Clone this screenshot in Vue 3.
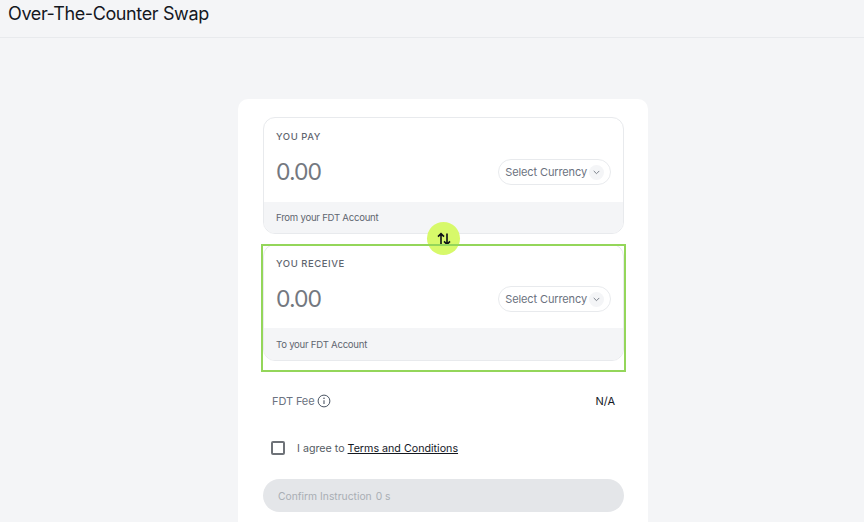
<script setup>
const panels = [
  { label: 'YOU PAY', note: 'From your FDT Account', selected: false },
  { label: 'YOU RECEIVE', note: 'To your FDT Account', selected: true }
]
</script>

<template>
  <div class="page">
    <header class="topbar"><h1>Over-The-Counter Swap</h1></header>
    <main class="main">
      <section class="card">
        <div class="swap-wrap">
          <template v-for="p in panels" :key="p.label">
            <div :class="['slot', { selected: p.selected }]">
              <div class="panel">
                <div class="panel-body">
                  <div class="label">{{ p.label }}</div>
                  <div class="row">
                    <span class="amount">0.00</span>
                    <button class="select" type="button">
                      <span>Select Currency</span>
                      <span class="chev">
                        <svg width="7" height="5" viewBox="0 0 7 5" fill="none"><path d="M1 1.2 3.5 3.7 6 1.2" stroke="#7b818a" stroke-width="1" stroke-linecap="round" stroke-linejoin="round"/></svg>
                      </span>
                    </button>
                  </div>
                </div>
                <div class="note">{{ p.note }}</div>
              </div>
            </div>
          </template>
          <div class="swap">
            <svg width="14" height="14" viewBox="0 0 14 14" fill="none"><path d="M4 12.5V1.8M1 4.6 4 1.6 7 4.6M10 1.5V12.2M7 9.4 10 12.4 13 9.4" stroke="#0d1117" stroke-width="1.6"/></svg>
          </div>
        </div>
        <div class="fee">
          <span class="fee-label">FDT Fee
            <svg width="14" height="14" viewBox="0 0 14 14" fill="none"><circle cx="7" cy="7" r="5.9" stroke="#4b5563" stroke-width="1"/><path d="M7 6.3V10" stroke="#4b5563" stroke-width="1.1"/><circle cx="7" cy="4.3" r=".8" fill="#4b5563"/></svg>
          </span>
          <span class="fee-value">N/A</span>
        </div>
        <label class="agree">
          <span class="box"></span>
          <span class="agree-text">I agree to <a>Terms and Conditions</a></span>
        </label>
        <button class="confirm" type="button">Confirm Instruction<span class="secs">0 s</span></button>
      </section>
    </main>
  </div>
</template>

<style>
html, body { margin: 0; background: #f4f5f7; overflow: hidden; }
</style>

<style scoped>
.page { height: 522px; overflow: hidden; background: #f4f5f7; font-family: Inter, "Liberation Sans", sans-serif; }
.topbar { height: 37px; border-bottom: 1px solid #e8eaed; padding-left: 8px; }
.topbar h1 { margin: 0; font-size: 18px; line-height: 27px; font-weight: 400; letter-spacing: -.38px; color: #14181f; }
.main { padding: 61px 0 0 238px; }
.card { width: 410px; height: 460px; box-sizing: border-box; background: #fff; border-radius: 10px; padding: 18px 24px 0 25px; }
.swap-wrap { position: relative; }
.slot { padding: 0 0 10px; position: relative; }
.slot.selected { padding-bottom: 11px; }
.slot.selected::after { content: ""; position: absolute; inset: 0 -2px; border: 2px solid #94d65a; z-index: 4; pointer-events: none; }
.panel { border: 1px solid #e8eaed; border-radius: 12px; overflow: hidden; background: #fff; box-sizing: border-box; height: 117px; display: flex; flex-direction: column; }
.panel-body { flex: 1; padding: 12px 12px 0; }
.label { font-size: 9.5px; line-height: 14px; font-weight: 500; letter-spacing: .55px; color: #5f6670; }
.row { display: flex; justify-content: space-between; align-items: center; margin-top: 15px; }
.amount { font-size: 23px; line-height: 26px; letter-spacing: -1px; color: #737880; }
.select { display: flex; align-items: center; gap: 2px; height: 26px; box-sizing: border-box; border: 1px solid #e8eaed; border-radius: 13px; background: #fff; padding: 0 6px; font: 400 11px Inter, sans-serif; letter-spacing: -.12px; color: #6b7280; }
.chev { width: 15px; height: 15px; border-radius: 50%; background: #f4f5f7; display: flex; align-items: center; justify-content: center; }
.note { height: 31px; line-height: 32px; background: #f4f5f7; padding-left: 12px; font-size: 9.6px; letter-spacing: -.25px; color: #5f6670; }
.selected .note { height: 32px; line-height: 34px; }
.swap { position: absolute; left: 164px; top: 105px; width: 33px; height: 33px; border-radius: 50%; background: #d7f96a; display: flex; align-items: center; justify-content: center; z-index: 3; }
.fee { display: flex; justify-content: space-between; align-items: center; padding: 0 9px; margin-top: 21px; height: 16px; font-size: 11px; }
.fee-label { display: flex; align-items: center; gap: 3px; color: #6b7280; letter-spacing: -.1px; }
.fee-value { color: #14181f; }
.agree { display: flex; align-items: center; gap: 12px; margin-top: 31px; padding-left: 8px; height: 16px; }
.box { width: 10px; height: 10px; border: 2px solid #6e7278; border-radius: 2px; }
.agree-text { font-size: 10.7px; color: #555b63; }
.agree-text a { color: #14181f; text-decoration: underline; text-underline-offset: 1px; }
.confirm { display: flex; align-items: center; margin-top: 23px; width: 361px; height: 33px; border: 0; border-radius: 17px; background: #e4e6e9; padding: 0 15px; font: 400 10.3px Inter, sans-serif; color: #a9aeb4; }
.secs { margin-left: 4px; }
</style>
